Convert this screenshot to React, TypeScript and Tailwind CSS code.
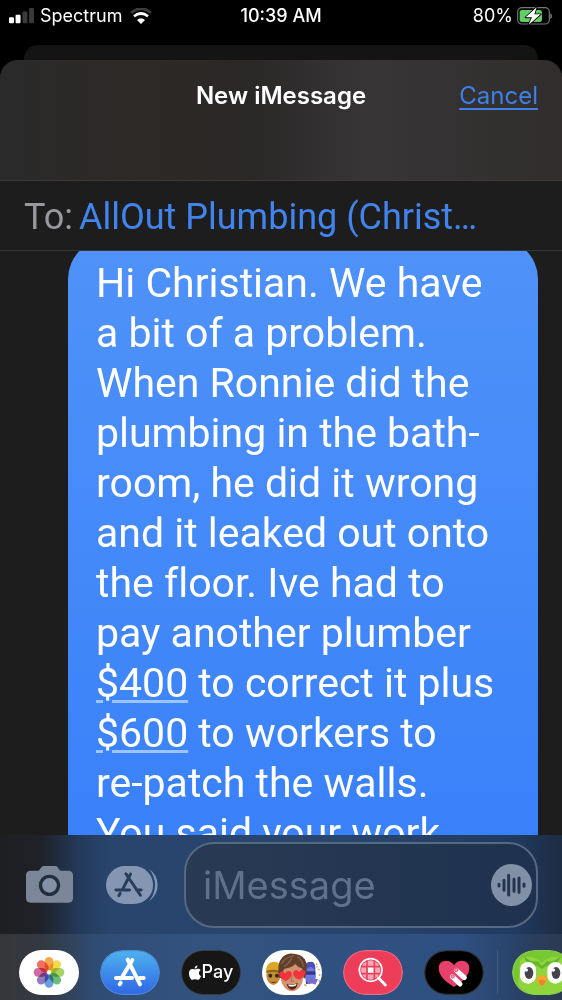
import React from "react";

function StatusBar() {
  return (
    <div className="grid h-8 shrink-0 grid-cols-3 items-center pl-[9px] pr-[9px] text-[18px] leading-[22px] text-white">
      <div className="flex items-center">
        <svg viewBox="0 0 76 48" className="mr-[6px] h-4 w-[25px]" aria-label="Signal strength">
          <rect x="0" y="28" width="15" height="18" rx="3" fill="#fff" />
          <rect x="20" y="20" width="15" height="26" rx="3" fill="#fff" />
          <rect x="41" y="10" width="15" height="36" rx="3" fill="#3a3a3a" />
          <rect x="61" y="0" width="15" height="46" rx="3" fill="#3a3a3a" />
        </svg>
        <span>Spectrum</span>
        <svg viewBox="0 0 66 48" className="ml-2 h-4 w-[22px]" fill="none" aria-label="Wi-Fi">
          <path d="M3 14Q33 -10 63 14" stroke="#3c3c3c" strokeWidth="8" />
          <path d="M12 25Q33 8 54 25" stroke="#fff" strokeWidth="8" />
          <path d="M21 36Q33 26 45 36L33 48Z" fill="#fff" />
        </svg>
      </div>
      <span className="text-center font-medium">10:39 AM</span>
      <div className="flex items-center justify-end">
        <span>80%</span>
        <svg viewBox="0 0 108 54" className="ml-1 h-[18px] w-9" aria-label="Battery charging">
          <rect x="2" y="2" width="95" height="49" rx="13" fill="none" stroke="#77777a" strokeWidth="3.5" />
          <path d="M101 20q7 7 0 15Z" fill="#77777a" stroke="#77777a" strokeWidth="2" />
          <rect x="8" y="9" width="67" height="36" rx="7" fill="#62ce63" />
          <path d="M59 1L26 31h19L35 53l36-31H52Z" fill="#fff" stroke="#000" strokeWidth="5" strokeLinejoin="round" paintOrder="stroke" />
        </svg>
      </div>
    </div>
  );
}

function CameraIcon() {
  return (
    <svg viewBox="0 0 141 111" className="h-[37px] w-[47px]" aria-hidden="true">
      <path
        d="M14 14h22q3 0 5-3l5-7q3-4 8-4h33q5 0 8 4l5 7q2 3 5 3h22q14 0 14 14v68q0 14-14 14H14q-14 0-14-14V28q0-14 14-14Z"
        fill="#7b8699"
      />
      <circle cx="70.500" cy="58" r="27" fill="#8390a6" stroke="#232e3d" strokeWidth="10" />
    </svg>
  );
}

function AppsIcon() {
  return (
    <svg viewBox="0 0 157 114" className="h-[38px] w-[52px]" fill="none" aria-hidden="true">
      <rect x="0" y="0" width="142" height="114" rx="57" fill="#8596b3" />
      <path d="M130 8q26 20 26 49t-26 49q18-22 18-49t-18-49Z" fill="#8596b3" />
      <g stroke="#263d5c" strokeWidth="9" strokeLinecap="round">
        <path d="M74 24L52 66M60 23L104 88M30 72h41M92 72h14M43 82l-4 7" />
      </g>
    </svg>
  );
}

function PhotosIcon() {
  const petals = ["#f49a35", "#f0d22f", "#9bc84b", "#52b06a", "#4f8fd8", "#8064b5", "#c85191", "#ed5945"];
  return (
    <svg viewBox="0 0 180 135" className="h-full w-full" aria-hidden="true">
      <rect width="180" height="135" fill="#fff" />
      {petals.map((color, i) => (
        <rect
          key={color}
          x="77"
          y="21"
          width="26"
          height="40"
          rx="13"
          fill={color}
          fillOpacity="0.85"
          transform={`rotate(${i * 45} 90 67)`}
          style={{ mixBlendMode: "multiply" }}
        />
      ))}
    </svg>
  );
}

function AppStoreIcon() {
  return (
    <svg viewBox="0 0 180 135" className="h-full w-full" aria-hidden="true">
      <defs>
        <linearGradient id="storeFill" x1="0" y1="0" x2="0" y2="1">
          <stop offset="0" stopColor="#4eb2ee" />
          <stop offset="1" stopColor="#2f67e4" />
        </linearGradient>
      </defs>
      <rect x="2" y="2" width="176" height="131" rx="65.500" fill="url(#storeFill)" stroke="#4d87d8" strokeWidth="4" />
      <g stroke="#fff" strokeWidth="12" strokeLinecap="round" fill="none">
        <path d="M97 30L66 82M83 29L120 103M48 84h48M118 84h13M62 98l-3 5" />
      </g>
    </svg>
  );
}

function ApplePayIcon() {
  return (
    <div className="flex h-full w-full items-center justify-center rounded-full border border-[#3c3c3c] bg-[#161617] text-[18px] font-medium leading-none text-white">
      <svg viewBox="0 0 36 44" className="mr-px h-[15px] w-3" fill="#fff" aria-hidden="true">
        <path d="M25 0q1 8-8 11Q16 4 25 0Z" />
        <path d="M18 13c4 0 5-3 10-2 3 0 5 2 7 4-8 5-6 15 1 18-3 7-6 11-10 11-3 0-4-2-8-2s-5 2-8 2C4 44-4 26 2 16c4-6 10-5 16-3Z" />
      </svg>
      <span>Pay</span>
    </div>
  );
}

function MemojiIcon() {
  return (
    <svg viewBox="0 0 180 135" className="h-full w-full" aria-hidden="true">
      <rect width="180" height="135" fill="#fff" />
      <ellipse cx="34" cy="75" rx="21" ry="30" fill="#c78e36" />
      <path d="M12 66q0-31 25-31 14 0 20 15v17q-20-7-45-1Z" fill="#dba729" />
      <path d="M13 63q20-7 40 0v6q-20-6-40 0Z" fill="#94651f" />
      <circle cx="25" cy="77" r="6" fill="#332a25" />
      <circle cx="45" cy="77" r="6" fill="#332a25" />
      <path d="M21 92q13 8 24 0-8 14-24 0Z" fill="#54271b" />
      <path d="M127 47q8-15 25-11 8 4 8 20v42l-28 5Z" fill="#514eb3" />
      <ellipse cx="145" cy="76" rx="16" ry="25" fill="#687bdc" />
      <path d="M128 64h32v10h-32Z" fill="#383590" />
      <path d="M144 84l24 4-8 16-18-8Z" fill="#7d67c7" />
      <path d="M162 44l4-3M168 58l5 1M171 77l4-4M165 106l5 2M127 103l6 6" stroke="#dcae36" strokeWidth="4" />
      <path d="M164 50l2 2M170 92l3 2" stroke="#6279d5" strokeWidth="4" />
      <ellipse cx="90" cy="78" rx="34" ry="46" fill="#d1936e" />
      <path d="M52 84Q42 40 62 21 76 8 94 11q30 1 38 25 6 18-3 49l-5-1q1-20-5-29-12-3-19-13-12 12-32 14-8 8-11 28Z" fill="#60402c" />
      <path d="M58 42q10-20 38-25M66 50q14-8 24-27M106 20q16 10 18 30" stroke="#88604a" strokeWidth="4" fill="none" />
      <path d="M73 93C56 88 46 74 55 66q9-5 15 4 6-10 15-6c10 7 2 20-12 29Z" fill="#f0333d" />
      <path d="M112 89C96 83 88 70 97 62q9-5 15 4 6-10 15-5c9 8 0 19-15 28Z" fill="#f0333d" />
      <path d="M91 76l-4 17q5 4 9 0" stroke="#a9694b" strokeWidth="3" fill="none" />
      <path d="M74 102q17 5 33-4-2 20-17 21-12 0-16-17Z" fill="#5b211c" />
      <path d="M78 104q14 2 26-3l-3 6q-12 4-20 2Z" fill="#fff" />
    </svg>
  );
}

function SearchIcon() {
  return (
    <svg viewBox="0 0 180 135" className="h-full w-full" fill="none" aria-hidden="true">
      <rect x="2" y="2" width="176" height="131" rx="65.500" fill="#ed3d59" stroke="#e96a83" strokeWidth="4" />
      <circle cx="83" cy="60" r="29" fill="#f8a7b5" />
      <path d="M53 50h60M53 71h60M72 30v60M94 30v60" stroke="#e9415c" strokeWidth="5" />
      <rect x="75" y="53" width="16" height="15" fill="#fff" />
      <circle cx="83" cy="60" r="34" stroke="#fff" strokeWidth="5" />
      <path d="M107 84l20 21" stroke="#fff" strokeWidth="9" strokeLinecap="round" />
    </svg>
  );
}

function HeartIcon() {
  return (
    <svg viewBox="0 0 180 135" className="h-full w-full" fill="none" aria-hidden="true">
      <rect x="2" y="2" width="176" height="131" rx="65.500" fill="#000" stroke="#343434" strokeWidth="4" />
      <path d="M90 111C63 95 44 76 44 55c0-25 32-31 46-9 14-22 46-16 46 9 0 21-19 40-46 56Z" fill="#e7416b" />
      <g stroke="#fff" strokeWidth="15" strokeLinecap="round">
        <path d="M97 61L121 83M85 80l23 22" />
      </g>
      <g stroke="#e7416b" strokeWidth="3" fill="#f4a5ba">
        <circle cx="97" cy="60" r="5" />
        <circle cx="86" cy="79" r="5" />
      </g>
      <path d="M94 74l20 19" stroke="#e7416b" strokeWidth="4" />
    </svg>
  );
}

function OwlIcon() {
  return (
    <svg viewBox="0 0 180 135" className="h-full w-full" aria-hidden="true">
      <rect x="2" y="2" width="176" height="131" rx="65.500" fill="#78c832" stroke="#8ac657" strokeWidth="4" />
      <path d="M24 31q18-17 43-8 16 6 23 16 9-11 26-17 26-7 42 12l10 70q-26 32-78 31-53 0-71-31Z" fill="#8fd63d" />
      <path d="M35 17q19 21 42 17l13 14 15-14q24 3 41-17-8 34-39 29l-17 11-17-11q-31 2-38-29Z" fill="#67b52c" />
      <rect x="24" y="36" width="48" height="65" rx="24" fill="#fff" />
      <rect x="106" y="36" width="48" height="65" rx="24" fill="#fff" />
      <ellipse cx="51" cy="69" rx="13" ry="18" fill="#454349" />
      <ellipse cx="132" cy="69" rx="13" ry="18" fill="#454349" />
      <circle cx="43" cy="60" r="5" fill="#fff" />
      <circle cx="124" cy="60" r="5" fill="#fff" />
      <path d="M74 88q0-11 16-12 16 1 16 12-5 16-16 22-12-6-16-22Z" fill="#f3a72c" />
      <path d="M79 93q11-8 22 0-4 11-11 15-8-4-11-15Z" fill="#e78731" />
    </svg>
  );
}

function AppButton({ label, children }: { label: string; children: React.ReactNode }) {
  return (
    <button type="button" aria-label={label} className="h-[45px] w-[60px] shrink-0 overflow-hidden rounded-full">
      {children}
    </button>
  );
}

function Amount({ children }: { children: React.ReactNode }) {
  return (
    <a href="#amount" className="underline decoration-[#9cc5fb] decoration-3 underline-offset-3">
      {children}
    </a>
  );
}

export default function App() {
  return (
    <div className="flex h-screen flex-col overflow-hidden bg-black font-['Inter','Liberation_Sans',sans-serif]">
      <StatusBar />
      <div className="mx-6 mt-[13px] h-[15px] shrink-0 rounded-t-[14px] bg-[#141414]" />

      <main className="flex min-h-0 flex-1 flex-col overflow-hidden rounded-t-[18px] bg-[#1d1d1d]">
        <header className="grid h-[121px] shrink-0 grid-cols-[1fr_auto_1fr] items-start border-b border-[#3b3b3b] bg-[linear-gradient(90deg,#2a2a2a_0%,#2d2927_25%,#2a2827_45%,#373536_66%,#302d2c_100%)] px-6 pt-5">
          <h1 className="col-start-2 text-[24px] font-semibold leading-8 text-white">New iMessage</h1>
          <button
            type="button"
            className="justify-self-end text-[24px] leading-8 text-[#3f80e8] underline decoration-2 underline-offset-4"
          >
            Cancel
          </button>
        </header>

        <div className="flex h-[70px] shrink-0 items-center gap-1.5 border-b border-[#353535] px-6 pt-0.5 font-['Roboto','Inter',sans-serif] text-[36px] leading-[44px]">
          <span className="text-[#98989d]">To:</span>
          <a href="#recipient" className="text-[#4184ee]">
            AllOut Plumbing (Christ…
          </a>
        </div>

        <section className="min-h-0 flex-1 overflow-hidden pl-[68px] pr-6" aria-label="Conversation">
          <p className="-mt-3 whitespace-nowrap rounded-[40px] bg-linear-to-b from-[#4f92f8] to-[#3880fa] pb-4 pl-7 pt-[19px] font-['Roboto','Inter',sans-serif] text-[41px] leading-[50px] text-white [font-variant-ligatures:none]">
            Hi Christian. We have
            <br />a bit of a problem.
            <br />
            When Ronnie did the
            <br />
            plumbing in the bath-
            <br />
            room, he did it wrong
            <br />
            and it leaked out onto
            <br />
            the floor. Ive had to
            <br />
            pay another plumber
            <br />
            <Amount>$400</Amount> to correct it plus
            <br />
            <Amount>$600</Amount> to workers to
            <br />
            re-patch the walls.
            <br />
            You said your work
          </p>
        </section>

        <form
          className="flex h-[99px] shrink-0 items-center bg-[linear-gradient(90deg,#1e1f21_0%,#1e2127_7%,#233a59_14%,#2a456d_20%,#2a456d_60%,#213a5f_92%,#1c2c42_100%)] pl-[26px] pr-6"
          onSubmit={(event) => event.preventDefault()}
        >
          <button type="button" aria-label="Camera" className="mr-[33px] shrink-0">
            <CameraIcon />
          </button>
          <button type="button" aria-label="Apps" className="mr-[26px] shrink-0">
            <AppsIcon />
          </button>
          <div className="flex h-[86px] min-w-0 flex-1 items-center rounded-[30px] border-2 border-[#566983] bg-linear-to-r from-[#293a53] to-[#1e324f] pl-[17px] pr-1">
            <input
              type="text"
              aria-label="Message"
              placeholder="iMessage"
              className="min-w-0 flex-1 bg-transparent text-[38px] leading-[50px] text-white outline-none placeholder:text-[#5f718b]"
            />
            <button type="button" aria-label="Record audio" className="shrink-0">
              <svg viewBox="0 0 123 126" className="h-[42px] w-[41px]" aria-hidden="true">
                <ellipse cx="61.500" cy="63" rx="61.500" ry="63" fill="#8290a7" />
                <g stroke="#26364f" strokeWidth="9" strokeLinecap="round">
                  <path d="M24 61v5M39 49v30M53 34v59M69 46v36M84 42v43M99 60v7" />
                </g>
              </svg>
            </button>
          </div>
        </form>

        <nav
          className="flex h-[66px] shrink-0 items-center gap-[21px] overflow-hidden bg-[linear-gradient(90deg,#353638_0%,#333a44_8%,#2f4c74_17%,#33537f_35%,#2e5082_82%,#2a4266_92%,#2a3a50_100%)] pl-[19px] pt-[10px]"
          aria-label="iMessage apps"
        >
          <AppButton label="Photos"><PhotosIcon /></AppButton>
          <AppButton label="App Store"><AppStoreIcon /></AppButton>
          <AppButton label="Apple Pay"><ApplePayIcon /></AppButton>
          <AppButton label="Memoji"><MemojiIcon /></AppButton>
          <AppButton label="Images"><SearchIcon /></AppButton>
          <AppButton label="Digital Touch"><HeartIcon /></AppButton>
          <div className="-ml-2 -mr-[7px] h-11 w-px shrink-0 bg-[#3f5a80]" />
          <AppButton label="Duolingo"><OwlIcon /></AppButton>
        </nav>
      </main>
    </div>
  );
}
